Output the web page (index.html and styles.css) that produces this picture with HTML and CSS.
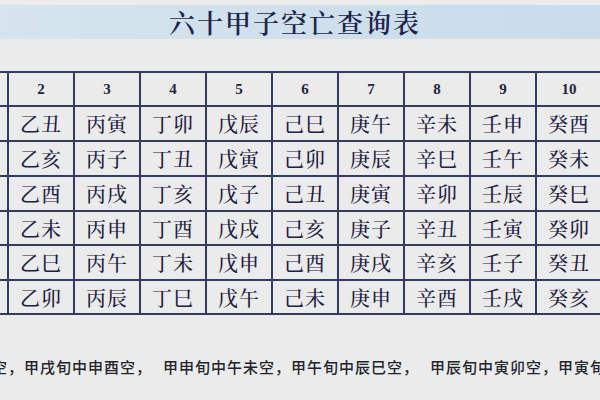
FILE: index.html
```html
<!DOCTYPE html>
<html lang="zh-CN">
<head>
<meta charset="utf-8">
<title>六十甲子空亡查询表</title>
<link rel="stylesheet" href="styles.css">
</head>
<body>
<div class="topstrip"></div>
<header class="titlebar"><h1 class="title">六十甲子空亡查询表</h1></header>
<div class="grid">
  <div class="cell head">1</div><div class="cell head">2</div><div class="cell head">3</div><div class="cell head">4</div><div class="cell head">5</div><div class="cell head">6</div><div class="cell head">7</div><div class="cell head">8</div><div class="cell head">9</div><div class="cell head">10</div>
  <div class="cell">甲子</div><div class="cell">乙丑</div><div class="cell">丙寅</div><div class="cell">丁卯</div><div class="cell">戊辰</div><div class="cell">己巳</div><div class="cell">庚午</div><div class="cell">辛未</div><div class="cell">壬申</div><div class="cell">癸酉</div>
  <div class="cell">甲戌</div><div class="cell">乙亥</div><div class="cell">丙子</div><div class="cell">丁丑</div><div class="cell">戊寅</div><div class="cell">己卯</div><div class="cell">庚辰</div><div class="cell">辛巳</div><div class="cell">壬午</div><div class="cell">癸未</div>
  <div class="cell">甲申</div><div class="cell">乙酉</div><div class="cell">丙戌</div><div class="cell">丁亥</div><div class="cell">戊子</div><div class="cell">己丑</div><div class="cell">庚寅</div><div class="cell">辛卯</div><div class="cell">壬辰</div><div class="cell">癸巳</div>
  <div class="cell">甲午</div><div class="cell">乙未</div><div class="cell">丙申</div><div class="cell">丁酉</div><div class="cell">戊戌</div><div class="cell">己亥</div><div class="cell">庚子</div><div class="cell">辛丑</div><div class="cell">壬寅</div><div class="cell">癸卯</div>
  <div class="cell">甲辰</div><div class="cell">乙巳</div><div class="cell">丙午</div><div class="cell">丁未</div><div class="cell">戊申</div><div class="cell">己酉</div><div class="cell">庚戌</div><div class="cell">辛亥</div><div class="cell">壬子</div><div class="cell">癸丑</div>
  <div class="cell">甲寅</div><div class="cell">乙卯</div><div class="cell">丙辰</div><div class="cell">丁巳</div><div class="cell">戊午</div><div class="cell">己未</div><div class="cell">庚申</div><div class="cell">辛酉</div><div class="cell">壬戌</div><div class="cell">癸亥</div>
</div>
<p class="note">甲子旬中戌亥空，甲戌旬中申酉空，<span class="gap"></span>甲申旬中午未空，甲午旬中辰巳空，<span class="gap"></span>甲辰旬中寅卯空，甲寅旬中子丑空</p>
</body>
</html>
```
FILE: styles.css
```css
html, body {
  margin: 0;
  padding: 0;
  width: 600px;
  height: 400px;
  overflow: hidden;
  background: #ebebeb;
  font-family: "Noto Serif CJK SC", "Noto Sans CJK SC", sans-serif;
  color: #1d2142;
}

.topstrip {
  height: 5px;
  background: #ececec;
}

.titlebar {
  height: 34px;
  background: linear-gradient(to right, #d5e4ee, #c9dcea);
  display: flex;
  align-items: center;
  justify-content: center;
}

.title {
  margin: 0;
  padding-right: 10px;
  font-size: 26px;
  font-weight: 600;
  letter-spacing: 2px;
  line-height: 34px;
  color: #1e2450;
}

.grid {
  margin-top: 32px;
  margin-left: -59px;
  width: 662px;
  display: grid;
  grid-template-columns: repeat(10, 64px);
  grid-template-rows: 32px 33px 33px 33px 32px 33px 32px;
  gap: 2px;
  padding: 2px;
  box-sizing: border-box;
  background: #343a60;
}

.cell {
  background: #ebebec;
  display: flex;
  align-items: center;
  justify-content: center;
  font-size: 20px;
  font-weight: 500;
  letter-spacing: 1px;
  color: #1d2142;
}

.cell.head {
  font-family: "Liberation Serif", serif;
  font-weight: bold;
  font-size: 15px;
  letter-spacing: 0;
  color: #222640;
}

.note {
  margin: 42px 0 0 -104px;
  white-space: nowrap;
  font-family: "Noto Sans CJK SC", sans-serif;
  font-size: 15px;
  font-weight: 500;
  letter-spacing: 1px;
  line-height: 20px;
  color: #23252e;
}

.gap {
  display: inline-block;
  width: 11px;
}
```
